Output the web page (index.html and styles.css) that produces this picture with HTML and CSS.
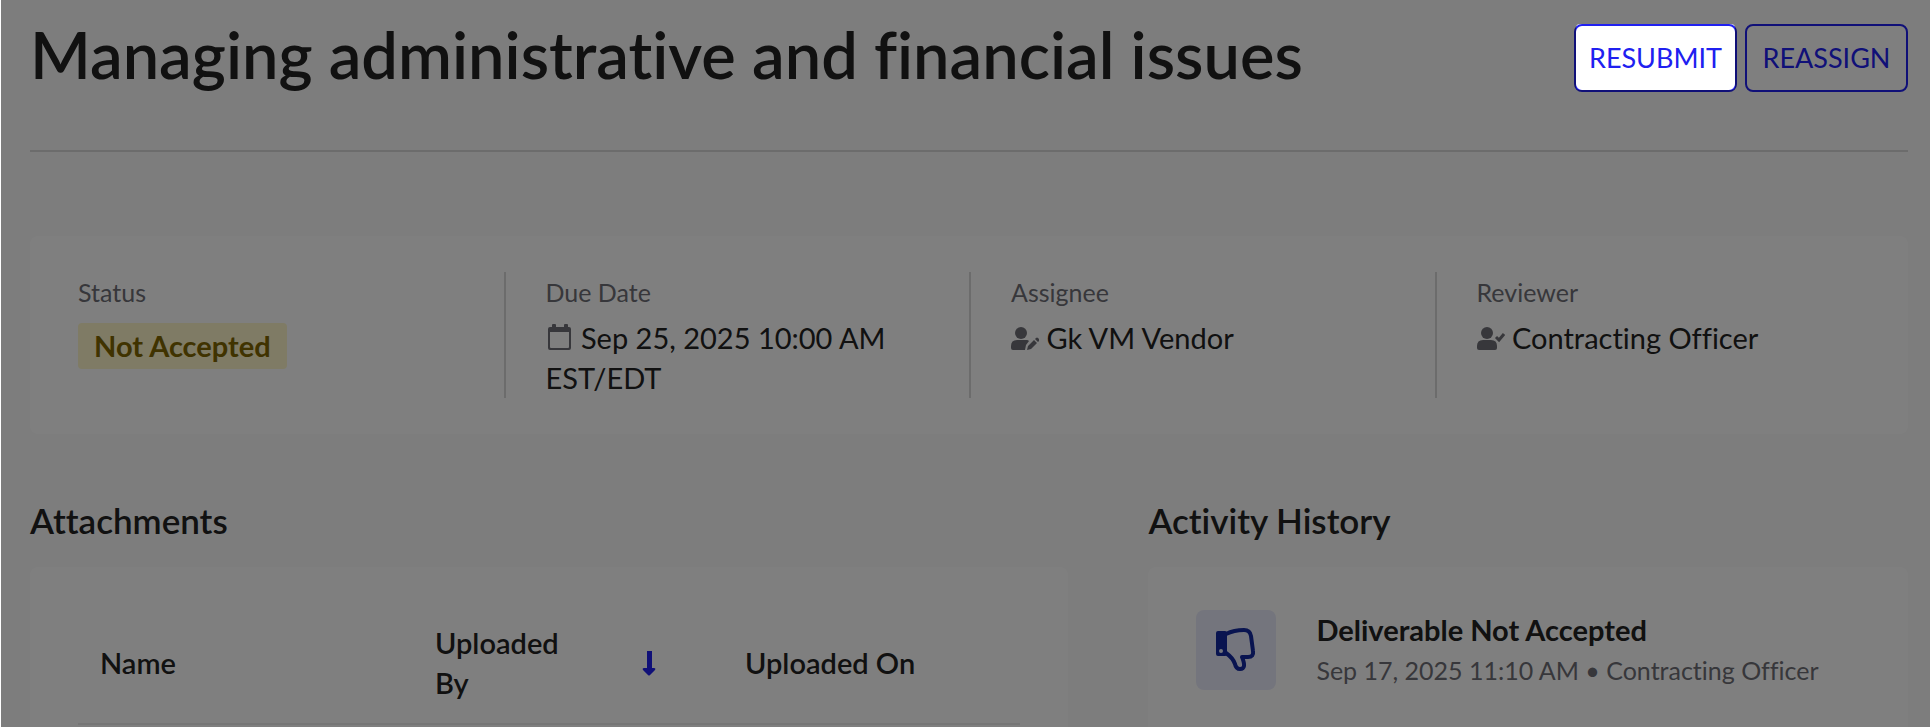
FILE: index.html
```html
<!DOCTYPE html>
<html lang="en">
<head>
    <meta charset="UTF-8">
    <meta name="viewport" content="width=device-width, initial-scale=1.0">
    <title>Managing administrative and financial issues</title>
    <link rel="stylesheet" href="styles.css">
</head>
<body>
    <main class="page">
        <header class="page-header">
            <h1>Managing administrative and financial issues</h1>
            <div class="actions">
                <!-- the spotlight dims everything except this button -->
                <div class="tour-target">
                    <button type="button" class="btn">RESUBMIT</button>
                    <span class="spotlight"></span>
                </div>
                <button type="button" class="btn">REASSIGN</button>
            </div>
        </header>

        <section class="card summary">
            <div class="summary-item">
                <div class="label">Status</div>
                <span class="badge">Not Accepted</span>
            </div>
            <div class="summary-item">
                <div class="label">Due Date</div>
                <div class="value">
                    <svg class="icon icon-calendar" viewBox="0 0 28 28" aria-hidden="true">
                        <path fill-rule="evenodd" d="M7 1h2q1 0 1 1v2h8V2q0-1 1-1h2q1 0 1 1v2h1q2 0 2 2v19q0 2-2 2H4q-2 0-2-2V6q0-2 2-2h2V2q0-1 1-1zM4 9v15q0 1 1 1h17q1 0 1-1V9z"/>
                    </svg>
                    Sep 25, 2025 10:00 AM EST/EDT
                </div>
            </div>
            <div class="summary-item">
                <div class="label">Assignee</div>
                <div class="value">
                    <svg class="icon" viewBox="0 0 28 24" aria-hidden="true">
                        <circle cx="10" cy="6" r="6"/>
                        <path d="M6 13h10q1 0 2 1l-3 4-1 5H2q-2 0-2-2v-2q0-6 6-6z"/>
                        <path d="M16 23l1-4 6-6 3 3-6 6zM24 12l1-1q1-1 2 0l1 1q1 1 0 2l-1 1z"/>
                    </svg>
                    Gk VM Vendor
                </div>
            </div>
            <div class="summary-item">
                <div class="label">Reviewer</div>
                <div class="value">
                    <svg class="icon" viewBox="0 0 28 24" aria-hidden="true">
                        <circle cx="10" cy="6" r="6"/>
                        <path d="M6 13h8q6 0 6 6v2q0 2-2 2H2q-2 0-2-2v-2q0-6 6-6z"/>
                        <path class="check" d="M19 10l3 3 5-6"/>
                    </svg>
                    Contracting Officer
                </div>
            </div>
        </section>

        <div class="columns">
            <section>
                <h2>Attachments</h2>
                <div class="card attachments">
                    <table>
                        <thead>
                            <tr>
                                <th class="col-name">Name</th>
                                <th class="col-by">
                                    <div class="sortable">
                                        <span>Uploaded By</span>
                                        <svg class="sort" viewBox="0 0 14 26" aria-hidden="true">
                                            <path d="M5 1h5v17h2q2 0 1 2l-5 5q-1 1-2 0l-5-5q-1-2 1-2h3z"/>
                                        </svg>
                                    </div>
                                </th>
                                <th>Uploaded On</th>
                            </tr>
                        </thead>
                    </table>
                </div>
            </section>
            <section>
                <h2>Activity History</h2>
                <div class="card history">
                    <div class="history-icon">
                        <svg viewBox="0 0 40 44" aria-hidden="true">
                            <path class="fill" fill-rule="evenodd" d="M2 3h7q2 0 2 2v21q0 2-2 2H2q-2 0-2-2V5q0-2 2-2zM5 21a2 2 0 0 0 0 4 2 2 0 0 0 0-4z"/>
                            <path class="line" d="M10 6Q18 2 28 2Q34 2 35 8L37 23Q38 29 32 29H26Q31 41 24 41Q20 41 19 36Q17 30 10 25"/>
                        </svg>
                    </div>
                    <div>
                        <div class="history-title">Deliverable Not Accepted</div>
                        <div class="history-meta">Sep 17, 2025 11:10 AM • Contracting Officer</div>
                    </div>
                </div>
            </section>
        </div>
    </main>
</body>
</html>
```

FILE: styles.css
```css
* {
    box-sizing: border-box;
}
body {
    margin: 0;
    padding: 0 0 1px 1px;
    background: #fff;
    color: #222;
    font-family: Lato, sans-serif;
    font-size: 29px;
    font-variant-ligatures: none;
    line-height: 40px;
}
.page {
    height: calc(100vh - 1px);
    overflow: hidden;
    padding: 24px 22px 0 29px;
    background: #fafafa;
}
.page-header {
    display: flex;
    justify-content: space-between;
    align-items: flex-start;
    height: 128px;
    border-bottom: 2px solid #d8d8d8;
}
h1 {
    margin: 0;
    font-size: 65px;
    font-weight: 600;
    line-height: 60px;
}
.actions {
    display: flex;
    gap: 8px;
}
.tour-target {
    position: relative;
}
.btn {
    display: block;
    width: 163px;
    height: 68px;
    padding: 0 0 2px;
    border: 2px solid #2020f0;
    border-radius: 8px;
    background: #fff;
    color: #2020f0;
    font-family: inherit;
    font-size: 27px;
}
.spotlight {
    position: absolute;
    z-index: 10;
    inset: 0 2px 2px 2px;
    border-radius: 4px;
    box-shadow: 0 0 0 4000px rgba(0, 0, 0, 0.5);
    pointer-events: none;
}
.card {
    border-radius: 8px;
    background: #fff;
}
.summary {
    display: grid;
    grid-template-columns: repeat(4, 1fr);
    margin-top: 84px;
    padding: 36px 8px;
}
.summary-item {
    min-height: 126px;
    padding: 0 40px;
}
.summary-item + .summary-item {
    border-left: 2px solid #d8d8d8;
}
.label {
    color: #6f6f76;
    font-size: 25px;
}
.value {
    margin-top: 6px;
}
.icon {
    width: 28px;
    height: 24px;
    fill: #6f6f76;
    vertical-align: -2px;
}
.icon-calendar {
    height: 28px;
}
.check {
    fill: none;
    stroke: #6f6f76;
    stroke-width: 3;
}
.badge {
    display: inline-block;
    margin-top: 11px;
    padding: 3px 16px;
    border-radius: 4px;
    background: #fff6ca;
    color: #806600;
    font-weight: 700;
}
.columns {
    display: grid;
    grid-template-columns: 1039fr 760fr;
    gap: 80px;
    margin-top: 65px;
}
h2 {
    margin: 0 0 26px;
    font-size: 35px;
    font-weight: 600;
    line-height: 42px;
}
.attachments {
    padding: 36px 48px;
    height: 240px;
}
table {
    width: 100%;
    border-collapse: collapse;
    table-layout: fixed;
}
th {
    height: 121px;
    padding: 0 22px;
    border-bottom: 2px solid #ececec;
    font-weight: 600;
    text-align: left;
}
.col-name {
    width: 335px;
}
.col-by {
    width: 310px;
}
.sortable {
    display: flex;
    justify-content: space-between;
    align-items: center;
    padding-right: 45px;
}
.sortable span {
    width: 140px;
}
.sort {
    width: 14px;
    height: 26px;
    fill: #2020f0;
}
.history {
    display: flex;
    gap: 40px;
    height: 240px;
    padding: 43px 48px;
}
.history-icon {
    display: flex;
    align-items: center;
    justify-content: center;
    width: 80px;
    height: 80px;
    border-radius: 8px;
    background: #e9ebfa;
}
.history-icon svg {
    width: 40px;
    height: 44px;
}
.fill {
    fill: #1228a0;
}
.line {
    fill: none;
    stroke: #1228a0;
    stroke-width: 4;
    stroke-linejoin: round;
}
.history-title {
    font-weight: 700;
}
.history-meta {
    color: #6f6f76;
    font-size: 25px;
}
```
